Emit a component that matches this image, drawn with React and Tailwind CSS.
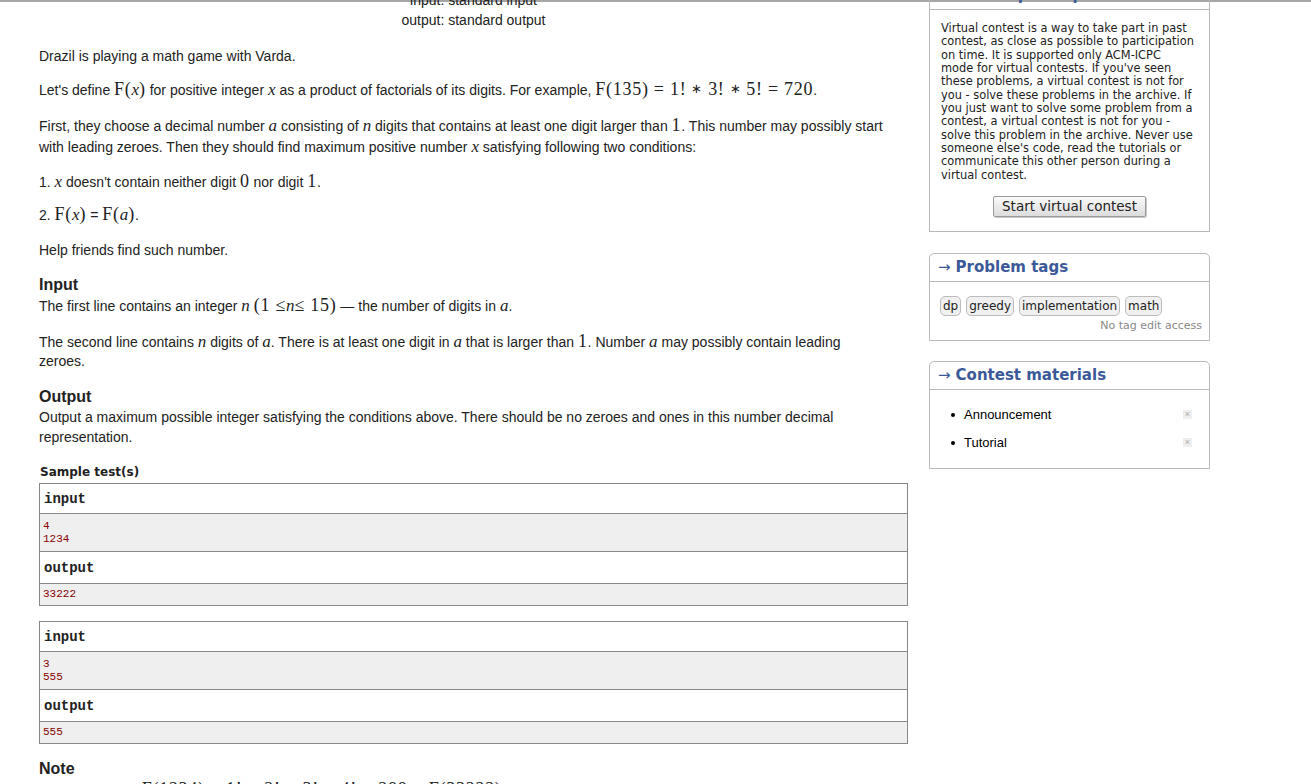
import React from "react";

// Inline math pieces, serif like the MathJax output
const M = ({ children }) => (
  <span className="font-['Liberation_Serif',serif] text-[18px] leading-none tracking-[0.04em]">
    {children}
  </span>
);
const V = ({ children }) => <i className="font-['Liberation_Serif',serif] text-[17px] leading-none">{children}</i>;
const Star = () => <span className="text-[13px] align-[2px] mx-[5px]">∗</span>;

function SampleBox({ input, output }) {
  return (
    <div className="border border-[#888] font-['Liberation_Mono',monospace]">
      <div className="h-[29px] flex items-center pl-[4px] text-[14px] font-bold text-[#222]">input</div>
      <div className="h-[38px] border-t border-[#888] bg-[#efefef] pl-[3px] pt-[6px] text-[11px] leading-[13px] text-[#880000]">
        {input.map((l) => (
          <div key={l}>{l}</div>
        ))}
      </div>
      <div className="h-[32px] border-t border-[#888] flex items-center pl-[4px] text-[14px] font-bold text-[#222]">
        output
      </div>
      <div className="h-[22px] border-t border-[#888] bg-[#efefef] pl-[3px] pt-[4px] text-[11px] leading-[13px] text-[#880000]">
        {output}
      </div>
    </div>
  );
}

function SideBox({ title, rounded, children }) {
  return (
    <div className={`border border-[#b9b9b9] ${rounded ? "rounded-t-[5px]" : ""}`}>
      <div className="h-[28px] border-b border-[#b9b9b9] flex items-center pl-[8px] text-[15px] text-[#3b5998] font-['DejaVu_Sans',sans-serif]">
        <span className="mr-[5px] font-normal">→</span>
        <span className="font-bold">{title}</span>
      </div>
      {children}
    </div>
  );
}

const virtualLines = [
  "Virtual contest is a way to take part in past",
  "contest, as close as possible to participation",
  "on time. It is supported only ACM-ICPC",
  "mode for virtual contests. If you've seen",
  "these problems, a virtual contest is not for",
  "you - solve these problems in the archive. If",
  "you just want to solve some problem from a",
  "contest, a virtual contest is not for you -",
  "solve this problem in the archive. Never use",
  "someone else's code, read the tutorials or",
  "communicate this other person during a",
  "virtual contest.",
];

const tags = ["dp", "greedy", "implementation", "math"];

export default function App() {
  return (
    <div className="h-[784px] w-[1311px] overflow-hidden bg-white">
      <div className="h-[2px] bg-[#a6a6a6]" />
      <div className="flex items-start">
        {/* Problem statement */}
        <div className="ml-[39px] w-[869px] -mt-[12px] font-['Liberation_Sans',Arial,sans-serif] text-[14px] leading-[20px] text-[#222]">
          <div className="text-center">input: standard input</div>
          <div className="text-center">output: standard output</div>

          <p className="mt-[16px]">Drazil is playing a math game with Varda.</p>

          <p className="mt-[14px] whitespace-nowrap">
            Let's define <M>F(</M>
            <V>x</V>
            <M>)</M> for positive integer <V>x</V> as a product of factorials of its digits. For example,{" "}
            <M>
              F(135) = 1!
              <Star />
              3!
              <Star />
              5! = 720
            </M>
            .
          </p>

          <p className="mt-[16px] leading-[21px] whitespace-nowrap">
            First, they choose a decimal number <V>a</V> consisting of <V>n</V> digits that contains at least one digit
            larger than <M>1</M>. This number may possibly start
            <br />
            with leading zeroes. Then they should find maximum positive number <V>x</V> satisfying following two
            conditions:
          </p>

          <p className="mt-[14px]">
            1. <V>x</V> doesn't contain neither digit <M>0</M> nor digit <M>1</M>.
          </p>

          <p className="mt-[13px]">
            2. <M>F(</M>
            <V>x</V>
            <M>)</M> = <M>F(</M>
            <V>a</V>
            <M>)</M>.
          </p>

          <p className="mt-[15px]">Help friends find such number.</p>

          <div className="mt-[15px] text-[16px] font-bold">Input</div>
          <p className="mt-[1px]">
            The first line contains an integer <V>n</V> <M>(1 ≤</M>
            <V>n</V>
            <M>≤ 15)</M> — the number of digits in <V>a</V>.
          </p>
          <p className="mt-[16px] leading-[19px] whitespace-nowrap">
            The second line contains <V>n</V> digits of <V>a</V>. There is at least one digit in <V>a</V> that is
            larger than <M>1</M>. Number <V>a</V> may possibly contain leading
            <br />
            zeroes.
          </p>

          <div className="mt-[16px] text-[16px] font-bold">Output</div>
          <p className="whitespace-nowrap">
            Output a maximum possible integer satisfying the conditions above. There should be no zeroes and ones in
            this number decimal
            <br />
            representation.
          </p>

          <div className="mt-[15px] pl-[1px] font-['DejaVu_Sans',sans-serif] text-[12px] font-bold">Sample test(s)</div>
          <div className="mt-[1px]">
            <SampleBox input={["4", "1234"]} output="33222" />
          </div>
          <div className="mt-[15px]">
            <SampleBox input={["3", "555"]} output="555" />
          </div>

          <div className="mt-[15px] text-[16px] font-bold">Note</div>
          <p className="mt-[1px]">
            In the first case,{" "}
            <M>
              F(1234) = 1!
              <Star />
              2!
              <Star />
              3!
              <Star />
              4! = 288 = F(33222)
            </M>
          </p>
        </div>

        {/* Sidebar */}
        <div className="ml-[21px] w-[281px] -mt-[21px] font-['DejaVu_Sans',sans-serif]">
          <SideBox title="Virtual participation">
            <div className="px-[11px] pt-[12px] pb-[14px]">
              <div className="text-[11.4px] leading-[13.33px] text-[#222] whitespace-nowrap">
                {virtualLines.map((l) => (
                  <div key={l}>{l}</div>
                ))}
              </div>
              <div className="mt-[14px] flex justify-center">
                <button className="h-[21px] px-[8px] border border-[#9a9a9a] rounded-[2px] bg-gradient-to-b from-[#fafafa] to-[#dcdcdc] shadow-[1px_1px_0_#c8c8c8] text-[13.5px] leading-[19px] text-[#222]">
                  Start virtual contest
                </button>
              </div>
            </div>
          </SideBox>

          <div className="mt-[21px]">
            <SideBox title="Problem tags" rounded>
              <div className="pl-[10px] pr-[7px] pt-[14px] pb-[8px]">
                <div className="flex gap-[5px]">
                  {tags.map((t) => (
                    <span
                      key={t}
                      className="h-[20px] px-[2px] flex items-center border border-[#bcbcbc] rounded-[5px] bg-[#f0f0f0] text-[12px] text-[#222]"
                    >
                      {t}
                    </span>
                  ))}
                </div>
                <div className="mt-[3px] text-right text-[11px] leading-[13px] text-[#888]">No tag edit access</div>
              </div>
            </SideBox>
          </div>

          <div className="mt-[20px]">
            <SideBox title="Contest materials" rounded>
              <div className="pt-[11px] pb-[11px] pl-[21px] pr-[17px] font-['Liberation_Sans',Arial,sans-serif] text-[13px] text-black">
                {["Announcement", "Tutorial"].map((m) => (
                  <div key={m} className="h-[28px] flex items-center">
                    <span className="w-[4px] h-[4px] rounded-full bg-black mr-[9px]" />
                    <span className="flex-1">{m}</span>
                    <span className="w-[9px] h-[9px] bg-[#eeeeee] flex items-center justify-center text-[9px] leading-none text-[#aaa]">
                      ×
                    </span>
                  </div>
                ))}
              </div>
            </SideBox>
          </div>
        </div>
      </div>
    </div>
  );
}
